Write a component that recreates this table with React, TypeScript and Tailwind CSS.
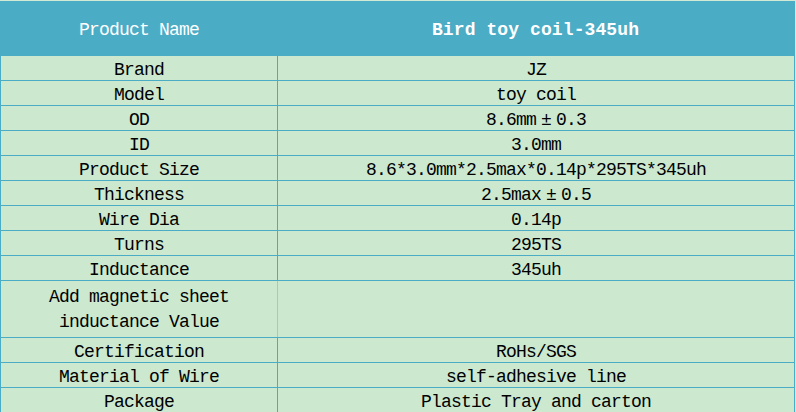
import React from "react";

const pm = <span className="inline-block w-[20px] text-center">±</span>;

const rows: { label: React.ReactNode; value: React.ReactNode; tall?: boolean }[] = [
  { label: "Brand", value: "JZ" },
  { label: "Model", value: "toy coil" },
  { label: "OD", value: <>8.6mm{pm}0.3</> },
  { label: "ID", value: "3.0mm" },
  { label: "Product Size", value: "8.6*3.0mm*2.5max*0.14p*295TS*345uh" },
  { label: "Thickness", value: <>2.5max{pm}0.5</> },
  { label: "Wire Dia", value: "0.14p" },
  { label: "Turns", value: "295TS" },
  { label: "Inductance", value: "345uh" },
  { label: <>Add magnetic sheet<br />inductance Value</>, value: "", tall: true },
  { label: "Certification", value: "RoHs/SGS" },
  { label: "Material of Wire", value: "self-adhesive line" },
  { label: "Package", value: "Plastic Tray and carton" },
];

export default function App() {
  return (
    <div className="w-[796px] h-[412px] overflow-hidden bg-[#d4e8d6] pt-[1px] font-['Liberation_Mono',monospace] text-[18px] text-black">
      <div className="w-[795px] border-x border-[#4bacc6] bg-[#cce8cf]">
        <div className="grid grid-cols-[276px_1fr] h-[55px] bg-[#4bacc6] text-white items-center">
          <div className="text-center tracking-[-0.8px] pt-[4px]">Product Name</div>
          <div className="text-center font-bold tracking-[0.1px] pt-[4px]">Bird toy coil-345uh</div>
        </div>
        {rows.map((r, i) => (
          <div
            key={i}
            className={`grid grid-cols-[277px_1fr] border-b border-[#4bacc6] ${r.tall ? "h-[57px]" : "h-[25px]"}`}
          >
            <div
              className={`flex items-center justify-center text-center border-r tracking-[-0.8px] ${
                r.tall ? "border-[#bdbdbd] leading-[25px] pt-[2px]" : "border-[#4bacc6] leading-[24px] pt-[2px]"
              }`}
            >
              <span>{r.label}</span>
            </div>
            <div className="flex items-center justify-center text-center tracking-[-0.8px] leading-[24px] pt-[2px]">
              <span>{r.value}</span>
            </div>
          </div>
        ))}
      </div>
    </div>
  );
}
